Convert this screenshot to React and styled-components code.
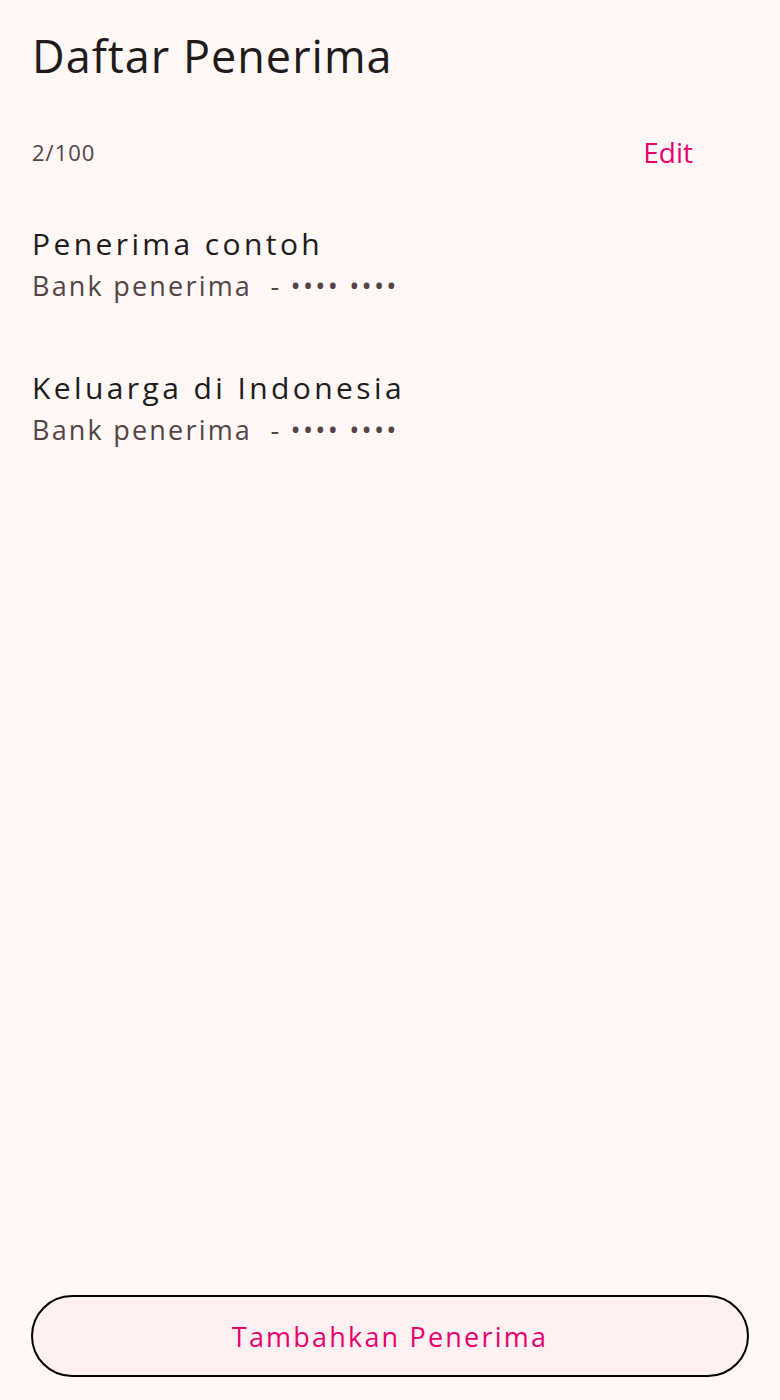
import React from "react";
import styled, { createGlobalStyle } from "styled-components";

const GlobalStyle = createGlobalStyle`
  html, body { margin: 0; padding: 0; background: #fff8f6; }
  body { font-family: "Open Sans", "Noto Sans", sans-serif; }
  * { box-sizing: border-box; }
`;

const Page = styled.div`
  min-height: 1400px;
  display: flex;
  flex-direction: column;
  padding: 0 31px 23px;
  background: #fff8f6;
  color: #201a1b;
`;

const Content = styled.div`
  padding-left: 1px;
  display: flex;
  flex-direction: column;
`;

const Title = styled.h1`
  margin: 26px 0 0;
  font-size: 45px;
  line-height: 60px;
  font-weight: 400;
  letter-spacing: 1px;
  color: #201a1b;
`;

const CounterRow = styled.div`
  margin-top: 46px;
  height: 40px;
  display: flex;
  align-items: center;
  justify-content: space-between;
`;

const Counter = styled.span`
  font-size: 22px;
  line-height: 40px;
  letter-spacing: 1px;
  color: #524345;
`;

const EditButton = styled.button`
  border: none;
  background: none;
  padding: 0;
  margin-right: 56px;
  font-family: inherit;
  font-size: 28px;
  line-height: 40px;
  color: #e6006f;
  cursor: pointer;
`;

const List = styled.div`
  margin-top: 19px;
  display: flex;
  flex-direction: column;
`;

const Item = styled.div`
  padding: 31px 0;
  display: flex;
  flex-direction: column;
  gap: 2px;
`;

const ItemTitle = styled.div`
  font-size: 30px;
  line-height: 44px;
  letter-spacing: 3.4px;
  color: #201a1b;
`;

const ItemSub = styled.div`
  font-size: 27px;
  line-height: 36px;
  letter-spacing: 2.2px;
  color: #524345;
  white-space: pre;
`;

const AddButton = styled.button`
  margin-top: auto;
  height: 82px;
  width: 100%;
  border: 2px solid #000;
  border-radius: 41px;
  background: #fff0f1;
  font-family: inherit;
  font-size: 27px;
  letter-spacing: 2.2px;
  color: #e6006f;
  cursor: pointer;
`;

const recipients = [
  { name: "Penerima contoh", bank: "Bank penerima", acct: "•••• ••••" },
  { name: "Keluarga di Indonesia", bank: "Bank penerima", acct: "•••• ••••" },
];

export default function App() {
  return (
    <>
      <GlobalStyle />
      <Page>
        <Content>
          <Title>Daftar Penerima</Title>
          <CounterRow>
            <Counter>2/100</Counter>
            <EditButton>Edit</EditButton>
          </CounterRow>
          <List>
            {recipients.map((r) => (
              <Item key={r.name}>
                <ItemTitle>{r.name}</ItemTitle>
                <ItemSub>{`${r.bank}  - ${r.acct}`}</ItemSub>
              </Item>
            ))}
          </List>
        </Content>
        <AddButton>Tambahkan Penerima</AddButton>
      </Page>
    </>
  );
}
